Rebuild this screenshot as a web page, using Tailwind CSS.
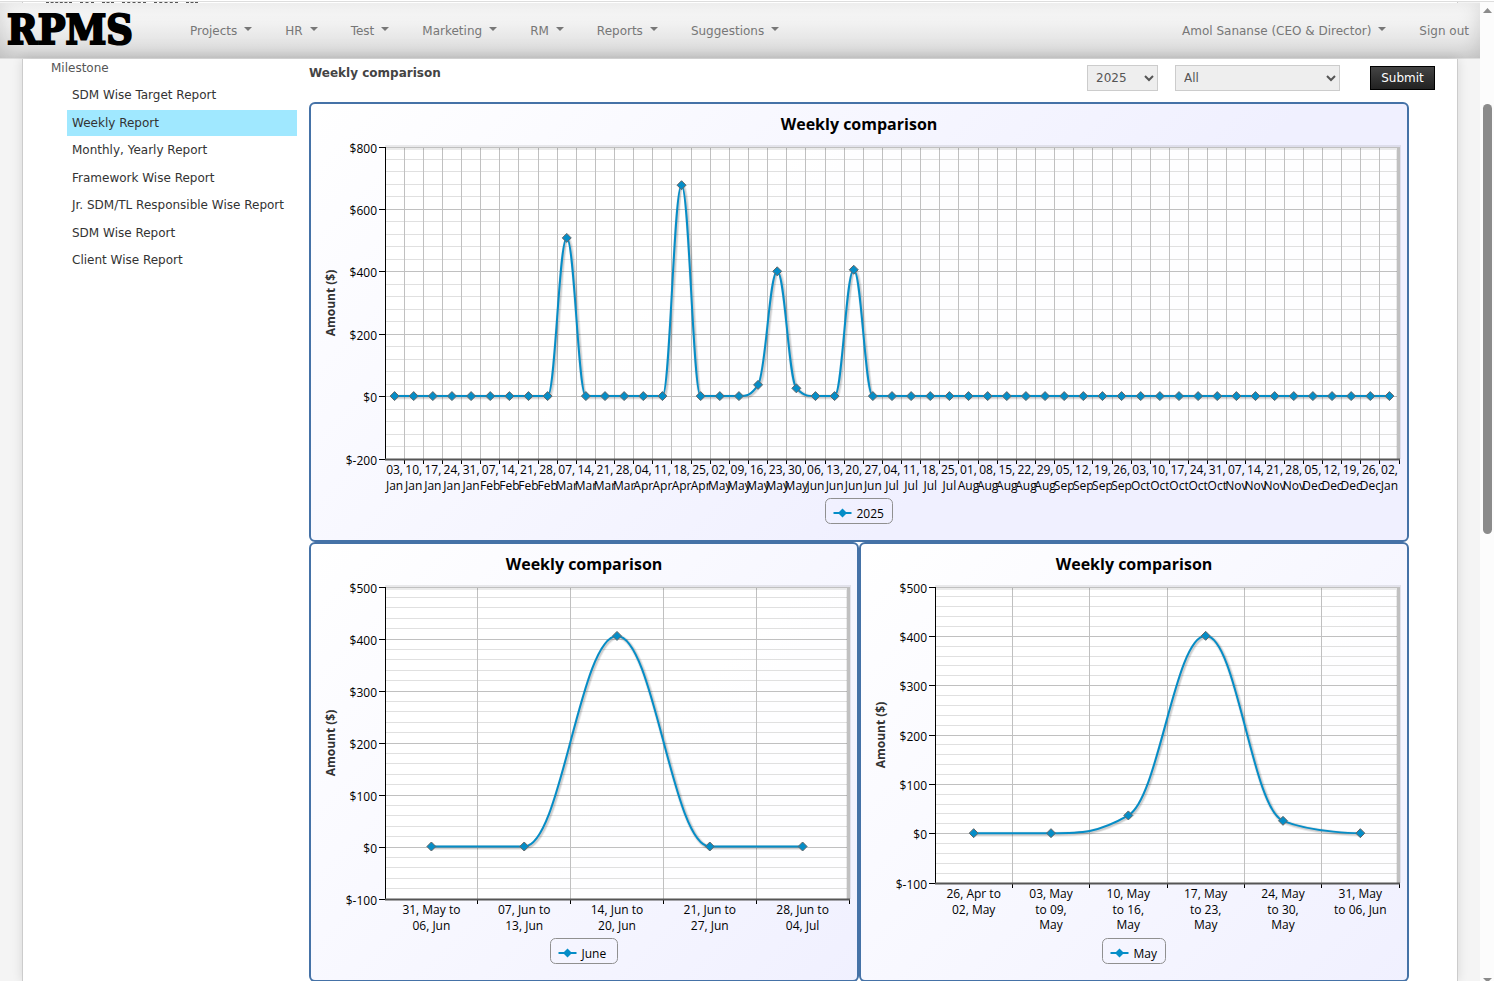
<!DOCTYPE html>
<html lang="en">

<head>
  <meta charset="UTF-8">
  <meta name="viewport" content="width=device-width, initial-scale=1.0">
  <title>RPMS - Weekly Report</title>
  <script src="https://cdn.jsdelivr.net/npm/@tailwindcss/browser@4"></script>
</head>

<body class="flex h-screen flex-col overflow-hidden bg-white font-['DejaVu_Sans',Verdana,sans-serif] text-xs text-[#555]">
  <div class="h-0.5 shrink-0 border-b border-[#ddd]"></div>

  <div class="flex min-h-0 flex-1">
  <div class="flex h-full min-w-0 flex-1 flex-col overflow-hidden bg-[#f4f4f4]">
    <!-- scrolled content that shows above the header -->
    <div class="mx-[22px] flex h-px shrink-0 gap-2 border-x border-[#ccc] bg-white pl-[23px]">
      <div class="w-[26px] border-t border-dashed border-[#555]"></div>
      <div class="w-3.5 border-t border-dashed border-[#555]"></div>
      <div class="w-3 border-t border-dashed border-[#555]"></div>
      <div class="w-6 border-t border-dashed border-[#555]"></div>
      <div class="w-6 border-t border-dashed border-[#555]"></div>
      <div class="w-3 border-t border-dashed border-[#555]"></div>
    </div>

    <!-- top navigation -->
    <header class="flex h-14 shrink-0 items-center border-b border-[#ddd] bg-linear-to-b from-white to-[#dadada] pr-[11px] pl-[7px] shadow-[inset_0_0_20px_rgba(0,0,0,0.15)]">
      <a href="#" class="w-[183px] font-['DejaVu_Serif_Condensed','DejaVu_Serif',serif] text-[41px] leading-none font-bold text-black [-webkit-text-stroke:2px_black]">RPMS</a>
      <nav class="flex flex-1 items-center gap-[33px] text-[#777]" id="nav"></nav>
      <div class="flex items-center gap-[33px] text-[#777]">
        <a href="#" class="flex items-center gap-[7px]">Amol Sananse (CEO &amp; Director)
          <svg class="mb-1 h-1 w-2" viewBox="0 0 8 4"><path d="M0 0h8L4 4z" fill="#777" /></svg></a>
        <a href="#">Sign out</a>
      </div>
    </header>

    <div class="mx-[22px] flex min-h-0 flex-1 overflow-hidden border-x border-[#ccc] bg-white shadow-[0_0_10px_rgba(0,0,0,0.12)]">
      <!-- reports menu -->
      <aside class="w-[286px] shrink-0 pr-3 pl-[28px]">
        <a href="#" class="block leading-[18px]">Milestone</a>
        <ul class="mt-[5px] ml-4 flex h-[191px] flex-col justify-between text-[#333]" id="menu"></ul>
      </aside>

      <main class="min-w-0 flex-1 pr-[22px]">
        <form class="flex h-[43px] items-start pt-1.5">
          <h1 class="mt-px flex-1 text-xs leading-3.5 font-bold text-[#444]">Weekly comparison</h1>
          <select aria-label="Year" class="mr-[17px] h-[26px] w-[71px] border border-[#ccc] bg-[#eee] pl-1">
            <option>2025</option>
          </select>
          <select aria-label="Manager" class="mr-[30px] h-[26px] w-[165px] border border-[#ccc] bg-[#eee] pl-1">
            <option>All</option>
          </select>
          <button type="button" class="mt-px h-6 w-[65px] border border-black bg-linear-to-b from-[#444] to-[#222] text-white">Submit</button>
        </form>
        <div class="mr-[26px] grid grid-cols-2">
          <div class="col-span-2" id="chart-year"></div>
          <div id="chart-june"></div>
          <div id="chart-may"></div>
        </div>
      </main>
    </div>
  </div>

  <!-- scrollbar -->
  <div class="flex w-3.5 shrink-0 flex-col items-center bg-[#fcfcfc]">
    <svg class="mt-1.5 h-[5px] w-[9px]" viewBox="0 0 9 5"><path d="M0 5h9L4.500 0z" fill="#8b8b8b" /></svg>
    <div class="mt-[91px] h-[430px] w-[9px] rounded-full bg-[#8b8b8b]"></div>
    <svg class="mt-auto h-[3px] w-[9px]" viewBox="0 0 9 3"><path d="M0 0h9L6 3H3z" fill="#8b8b8b" /></svg>
  </div>
  </div>

</body>
<script>
  const navItems = ['Projects', 'HR', 'Test', 'Marketing', 'RM', 'Reports', 'Suggestions']
  document.getElementById('nav').innerHTML = navItems.map(item => `
    <a href="#" class="flex items-center gap-[7px]">${item}
      <svg class="mb-1 h-1 w-2" viewBox="0 0 8 4"><path d="M0 0h8L4 4z" fill="#777" /></svg>
    </a>`).join('')

  const menuItems = ['SDM Wise Target Report', 'Weekly Report', 'Monthly, Yearly Report', 'Framework Wise Report',
    'Jr. SDM/TL Responsible Wise Report', 'SDM Wise Report', 'Client Wise Report']
  document.getElementById('menu').innerHTML = menuItems.map((item, i) => `
    <li><a href="#" class="${i === 1 ? 'block bg-[#a0e8ff] px-[5px] leading-[26px] whitespace-nowrap' : 'block px-[5px] leading-[26px] whitespace-nowrap'}">${item}</a></li>`).join('')

  // smooth line through the points, flat where a neighbour has the same value
  const splinePath = (pts) => {
    let d = `M${pts[0][0]} ${pts[0][1]}`
    let prev = pts[0]
    for (let i = 1; i < pts.length; i++) {
      const [x, y] = pts[i]
      const [lx, ly] = pts[i - 1]
      let left = [x, y], right = [x, y]
      if (i < pts.length - 1) {
        const [nx, ny] = pts[i + 1]
        left = [(1.5 * x + lx) / 2.5, (1.5 * y + ly) / 2.5]
        right = [(1.5 * x + nx) / 2.5, (1.5 * y + ny) / 2.5]
        const fix = (right[1] - left[1]) * (right[0] - x) / (right[0] - left[0]) + y - right[1]
        left[1] += fix
        right[1] += fix
        if (left[1] > ly && left[1] > y) { left[1] = Math.max(ly, y); right[1] = 2 * y - left[1] }
        else if (left[1] < ly && left[1] < y) { left[1] = Math.min(ly, y); right[1] = 2 * y - left[1] }
        if (right[1] > ny && right[1] > y) { right[1] = Math.max(ny, y); left[1] = 2 * y - right[1] }
        else if (right[1] < ny && right[1] < y) { right[1] = Math.min(ny, y); left[1] = 2 * y - right[1] }
      }
      d += `C${prev[0]} ${prev[1]} ${left[0]} ${left[1]} ${x} ${y}`
      prev = right
    }
    return d
  }

  const drawChart = (id, { width, bottom, min, max, step, labels, data, legend, legendWidth }) => {
    const left = 76, top = 45, right = width - 10
    const plotW = right - left, plotH = bottom - top
    const colW = plotW / labels.length
    const toY = v => bottom - (v - min) / (max - min) * plotH
    const crisp = v => Math.round(v) + 0.5
    let grid = '', text = ''

    for (let v = min; v <= max; v += step / 5) {
      const y = crisp(toY(v) - 0.5)
      const major = Math.abs(v % step) < 1
      grid += `<path d="M${left} ${y}H${right}" stroke="${major ? '#c0c0c0' : '#e0e0e0'}"/>`
      if (major) {
        grid += `<path d="M${left - 6} ${y}H${left}" stroke="#000"/>`
        text += `<text x="${left - 8}" y="${y + 5}" text-anchor="end">$${v}</text>`
      }
    }
    labels.forEach((lines, i) => {
      const x = crisp(left + colW * (i + 1) - 0.5)
      grid += `<path d="M${x} ${top}V${bottom}" stroke="#c0c0c0"/><path d="M${x} ${bottom}v5" stroke="#000"/>`
      lines.forEach((line, n) => {
        text += `<text x="${left + colW * (i + 0.5)}" y="${bottom + 15 + n * 15.5}" text-anchor="middle">${line}</text>`
      })
    })

    const pts = data.map((v, i) => [left + colW * (i + 0.5), toY(v) - 0.5])
    const path = splinePath(pts)
    const diamond = 'l4.500 4.500 -4.500 4.500 -4.500 -4.500z'
    const marks = pts.map(([x, y]) => `<path d="M${x} ${y - 4.5}${diamond}"/>`).join('')
    const mid = width / 2
    const lx = Math.round(mid - legendWidth / 2) - 0.5

    document.getElementById(id).innerHTML = `
    <svg class="block w-full font-['Trebuchet_MS','Open_Sans',sans-serif] text-[12px]" viewBox="0 0 ${width} 440" role="img" aria-label="Weekly comparison ${legend}">
      <defs>
        <linearGradient id="${id}-bg" gradientUnits="userSpaceOnUse" x1="0" y1="0" x2="500" y2="500">
          <stop offset="0" stop-color="#fff"/><stop offset="1" stop-color="#f0f0ff"/>
        </linearGradient>
      </defs>
      <rect x="1" y="1" width="${width - 2}" height="438" rx="5" fill="url(#${id}-bg)" stroke="#4572a7" stroke-width="2"/>
      <rect x="${left}" y="${top}" width="${plotW}" height="${plotH}" fill="#fff" fill-opacity="0.9"/>
      ${grid}
      <path d="M${left} ${top + 0.5}H${right - 0.5}V${bottom}" fill="none" stroke="#000" stroke-opacity="0.08" stroke-width="5"/>
      <path d="M${left} ${top + 0.5}H${right}" stroke="#c0c0c0"/>
      <path d="M${right - 0.5} ${top}V${bottom}" stroke="#c0c0c0" stroke-width="3"/>
      <path d="M${left + 0.5} ${top}V${bottom}" stroke="#000"/>
      <path d="M${left} ${bottom + 0.5}H${right + 1}" stroke="#555" stroke-width="2"/>
      <path d="${path}" transform="translate(1 1)" fill="none" stroke="#000" stroke-opacity="0.08" stroke-width="5"/>
      <path d="${path}" transform="translate(1 1)" fill="none" stroke="#000" stroke-opacity="0.12" stroke-width="3"/>
      <path d="${path}" fill="none" stroke="#058dc7" stroke-width="2"/>
      <g fill="#058dc7" stroke="#666">${marks}</g>
      <text x="${mid}" y="28" text-anchor="middle" class="text-[16px] font-bold">Weekly comparison</text>
      <text transform="translate(26 ${(top + bottom) / 2}) rotate(-90)" text-anchor="middle" class="text-[12px] font-bold" fill="#333">Amount ($)</text>
      <g fill="#000">${text}</g>
      <rect x="${lx}" y="396.5" width="${legendWidth}" height="25" rx="5" fill="none" stroke="#909090"/>
      <path d="M${lx + 8} 411h18" stroke="#058dc7" stroke-width="2"/>
      <path d="M${lx + 17} 406.500${diamond}" fill="#058dc7"/>
      <text x="${lx + 31}" y="416" fill="#000">${legend}</text>
    </svg>`
  }

  // one label per week of the year, split over two lines
  const months = ['Jan', 'Feb', 'Mar', 'Apr', 'May', 'Jun', 'Jul', 'Aug', 'Sep', 'Oct', 'Nov', 'Dec']
  const weeks = Array.from({ length: 53 }, (_, i) => {
    const day = new Date(2025, 0, 3 + i * 7)
    return [String(day.getDate()).padStart(2, '0') + ',', months[day.getMonth()]]
  })
  const totals = Array(53).fill(0)
  totals[9] = 507
  totals[15] = 676
  totals[19] = 36
  totals[20] = 400
  totals[21] = 25
  totals[24] = 405

  drawChart('chart-year', {
    width: 1100, bottom: 357, min: -200, max: 800, step: 200,
    labels: weeks, data: totals, legend: '2025', legendWidth: 67
  })
  drawChart('chart-june', {
    width: 550, bottom: 357, min: -100, max: 500, step: 100,
    labels: [['31, May to', '06, Jun'], ['07, Jun to', '13, Jun'], ['14, Jun to', '20, Jun'], ['21, Jun to', '27, Jun'], ['28, Jun to', '04, Jul']],
    data: [0, 0, 405, 0, 0], legend: 'June', legendWidth: 67
  })
  drawChart('chart-may', {
    width: 550, bottom: 341, min: -100, max: 500, step: 100,
    labels: [['26, Apr to', '02, May'], ['03, May', 'to 09,', 'May'], ['10, May', 'to 16,', 'May'], ['17, May', 'to 23,', 'May'], ['24, May', 'to 30,', 'May'], ['31, May', 'to 06, Jun']],
    data: [0, 0, 36, 400, 25, 0], legend: 'May', legendWidth: 63
  })
</script>

</html>
